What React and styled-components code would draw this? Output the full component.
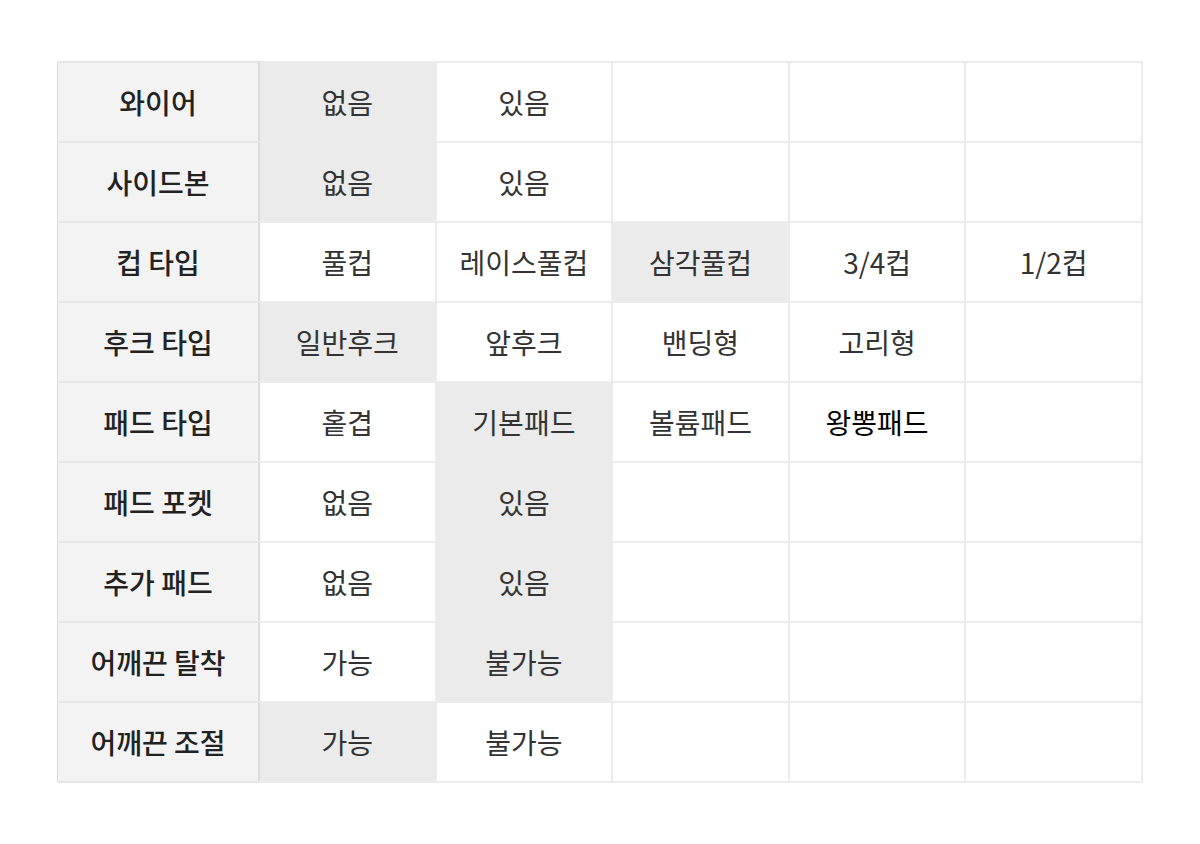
import React from "react";
import styled, { createGlobalStyle } from "styled-components";

const Global = createGlobalStyle`
  body {
    margin: 0;
    background: #fff;
    font-family: "Noto Sans CJK KR", "Noto Sans", sans-serif;
  }
`;

const Page = styled.div`
  padding: 61px 57px;
`;

const Table = styled.table`
  width: 1086px;
  border-collapse: collapse;
  table-layout: fixed;
  border: 1px solid #dadada;
`;

const Head = styled.th`
  width: 200px;
  height: 78px;
  padding: 0;
  background: #f3f3f3;
  color: #222;
  font-size: 28px;
  font-weight: 500;
  line-height: 1;
  border-top: 2px solid #e6e6e6;
  border-bottom: 2px solid #e6e6e6;
  border-right: 2px solid #dcdcdc;
`;

const Cell = styled.td`
  height: 78px;
  padding: 0;
  text-align: center;
  font-size: 28px;
  font-weight: 400;
  line-height: 1;
  color: ${(p) => (p.$dark ? "#000" : "#333")};
  background: ${(p) => (p.$on ? "#ebebeb" : "#fff")};
  border: 2px solid #ececec;
`;

const rows = [
  ["와이어", ["없음", "있음"], 0],
  ["사이드본", ["없음", "있음"], 0],
  ["컵 타입", ["풀컵", "레이스풀컵", "삼각풀컵", "3/4컵", "1/2컵"], 2],
  ["후크 타입", ["일반후크", "앞후크", "밴딩형", "고리형"], 0],
  ["패드 타입", ["홑겹", "기본패드", "볼륨패드", "왕뽕패드"], 1],
  ["패드 포켓", ["없음", "있음"], 1],
  ["추가 패드", ["없음", "있음"], 1],
  ["어깨끈 탈착", ["가능", "불가능"], 1],
  ["어깨끈 조절", ["가능", "불가능"], 0],
];

export default function App() {
  return (
    <Page>
      <Global />
      <Table>
        <tbody>
          {rows.map(([label, opts, sel]) => (
            <tr key={label}>
              <Head>{label}</Head>
              {[0, 1, 2, 3, 4].map((i) => (
                <Cell key={i} $on={i === sel} $dark={opts[i] === "왕뽕패드"}>
                  {opts[i] || ""}
                </Cell>
              ))}
            </tr>
          ))}
        </tbody>
      </Table>
    </Page>
  );
}
